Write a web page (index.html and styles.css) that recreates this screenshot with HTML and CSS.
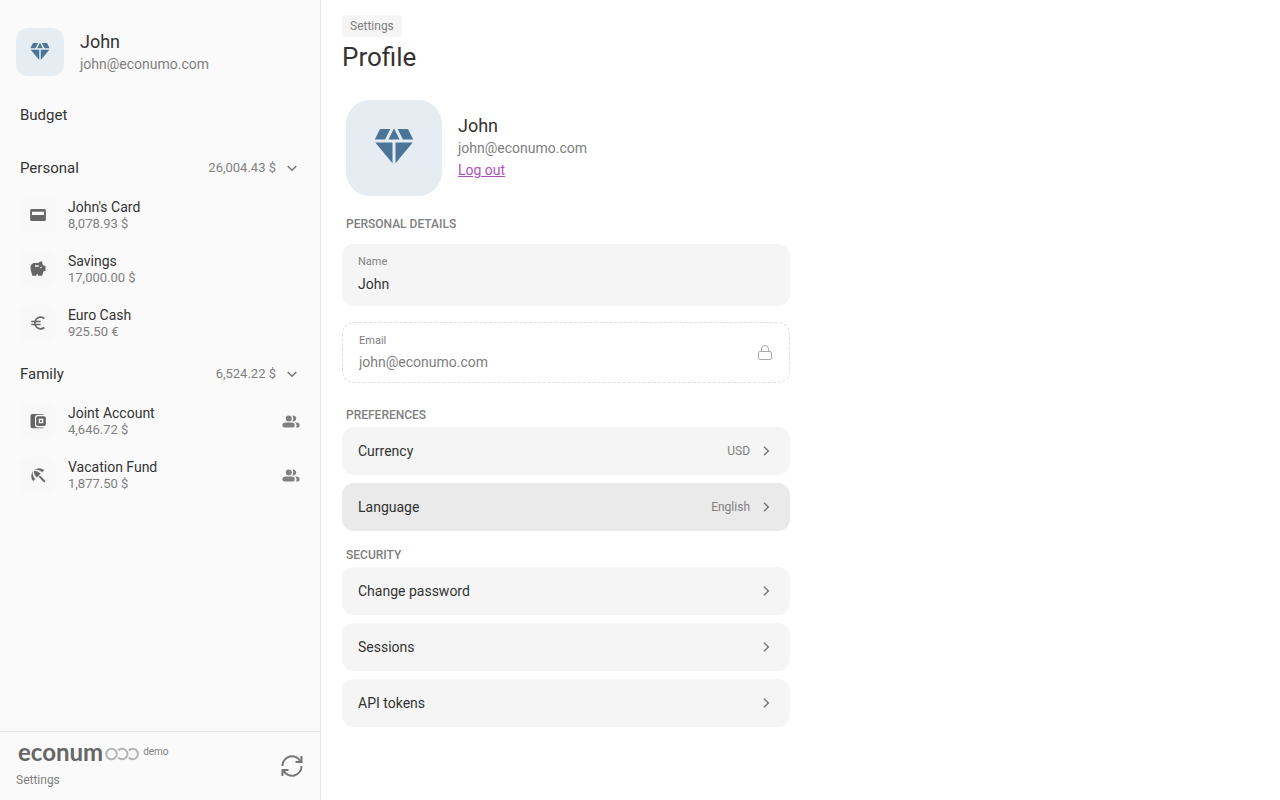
FILE: index.html
```html
<!DOCTYPE html>
<html lang="en">
<head>
    <meta charset="UTF-8">
    <meta name="viewport" content="width=device-width, initial-scale=1.0">
    <title>Profile</title>
    <link rel="stylesheet" href="styles.css">
</head>
<body>
    <svg class="sprite" aria-hidden="true">
        <symbol id="diamond" viewBox="0 0 24 24">
            <path d="M12.16 3h-.32L9.21 8.25h5.58zm4.3 5.25h5.16L19 3h-5.16zm4.92 1.5h-8.63V20.1zM11.25 20.1V9.75H2.62zM7.54 8.25 10.16 3H5L2.38 8.25z"/>
        </symbol>
        <symbol id="people" viewBox="0 0 24 24">
            <circle cx="9" cy="8.500" r="4"/>
            <path d="M15 12.500c2.210 0 4-1.790 4-4s-1.790-4-4-4c-.47 0-.91.1-1.330.24C14.500 5.770 15 7.080 15 8.500s-.5 2.730-1.330 3.760c.42.14.86.24 1.330.24z"/>
            <path d="M5 14h8q4 0 4 3.500t-3 3H4q-3.500 0-3.500-3T5 14zM17 14h2q4.500 0 4.500 3.500t-3 3h-2q1-1 1-3t-2.500-3.500z"/>
        </symbol>
        <symbol id="chevron" viewBox="0 0 24 24">
            <path d="M9 5.500l6.500 6.500L9 18.500" fill="none" stroke="currentColor" stroke-width="2.200"/>
        </symbol>
    </svg>

    <div class="layout">
        <aside class="sidebar">
            <div class="user">
                <div class="avatar"><svg class="icon"><use href="#diamond"/></svg></div>
                <div>
                    <div class="user-name">John</div>
                    <div class="user-email">john@econumo.com</div>
                </div>
            </div>

            <nav class="nav">
                <a class="budget" href="#">Budget</a>

                <button class="folder" type="button">
                    <span class="folder-name">Personal</span>
                    <span class="amount">26,004.43 $</span>
                    <svg class="arrow down"><use href="#chevron"/></svg>
                </button>
                <ul class="accounts">
                    <li>
                        <a class="account" href="#">
                            <span class="account-icon"><svg class="icon" viewBox="0 0 24 24"><path fill-rule="evenodd" d="M3.500 4h17a2 2 0 0 1 2 2v12a2 2 0 0 1-2 2h-17a2 2 0 0 1-2-2V6a2 2 0 0 1 2-2zm.5 3.500V12h16V7.500z"/></svg></span>
                            <span class="account-text"><span class="account-name">John's Card</span><span class="amount">8,078.93 $</span></span>
                        </a>
                    </li>
                    <li>
                        <a class="account" href="#">
                            <span class="account-icon"><svg class="icon" viewBox="0 0 24 24"><path d="M19.830 7.500l-2.270-2.270c.07-.42.18-.81.32-1.150.08-.18.12-.37.12-.58 0-.83-.67-1.500-1.500-1.500-1.640 0-3.090.79-4 2h-5C4.460 4 2 6.460 2 9.500S4.500 21 4.500 21H10v-2h2v2h5.500l1.680-5.590 2.820-.94V7.500h-2.170zM13 9H8V7h5v2zm3 2c-.55 0-1-.45-1-1s.45-1 1-1 1 .45 1 1-.45 1-1 1z"/></svg></span>
                            <span class="account-text"><span class="account-name">Savings</span><span class="amount">17,000.00 $</span></span>
                        </a>
                    </li>
                    <li>
                        <a class="account" href="#">
                            <span class="account-icon"><svg class="icon" viewBox="0 0 24 24"><path d="M20.500 6A7.800 7.800 0 1 0 20.500 18M3 10h12.500M3 14h12.500" fill="none" stroke="currentColor" stroke-width="2.200"/></svg></span>
                            <span class="account-text"><span class="account-name">Euro Cash</span><span class="amount">925.50 €</span></span>
                        </a>
                    </li>
                </ul>

                <button class="folder" type="button">
                    <span class="folder-name">Family</span>
                    <span class="amount">6,524.22 $</span>
                    <svg class="arrow down"><use href="#chevron"/></svg>
                </button>
                <ul class="accounts">
                    <li>
                        <a class="account" href="#">
                            <span class="account-icon"><svg class="icon" viewBox="0 0 24 24"><path d="M20 20.500q-.5 1-2 1H4.500q-2.500 0-2.500-2.500V5q0-2.500 2.500-2.500H18q1.500 0 2 1h-8q-4 0-4 4v9q0 4 4 4z"/><path fill-rule="evenodd" d="M12 5.500h8q2.500 0 2.500 2.500v8q0 2.500-2.500 2.500h-8q-2.500 0-2.500-2.500V8q0-2.500 2.500-2.500zm1 3.500v6h6V9z"/><circle cx="16" cy="12" r="1.500"/></svg></span>
                            <span class="account-text"><span class="account-name">Joint Account</span><span class="amount">4,646.72 $</span></span>
                            <svg class="shared"><use href="#people"/></svg>
                        </a>
                    </li>
                    <li>
                        <a class="account" href="#">
                            <span class="account-icon"><svg class="icon" viewBox="0 0 24 24"><path d="M12.700 14.400l1.800-1.800 7.500 7.500L20.200 22z"/><path stroke="#f8f8f8" d="M17.420 8.830l3.400-3.400c-4.400-3.900-10.900-3.900-14.860.53 3.930-1.300 8.330-.26 11.460 2.870zM5.950 5.980c-4.400 3.950-4.400 10.400-.5 14.800l3.380-3.360C5.700 14.290 4.650 9.910 5.950 5.980zm.02-.02l-.01.01c-.38 3.010 1.170 6.880 4.300 10.020l5.730-5.730c-3.130-3.130-7.010-4.680-10.020-4.300z"/></svg></span>
                            <span class="account-text"><span class="account-name">Vacation Fund</span><span class="amount">1,877.50 $</span></span>
                            <svg class="shared"><use href="#people"/></svg>
                        </a>
                    </li>
                </ul>
            </nav>

            <footer class="footer">
                <div>
                    <div class="brand">
                        <span class="logo">econum</span>
                        <svg class="rings" viewBox="0 0 34 18"><g fill="none" stroke="#b5b5b5" stroke-width="2"><circle cx="6.500" cy="11" r="5.300"/><path d="M13.200 7.500a5.300 5.300 0 1 1 0 7M23.700 7.500a5.300 5.300 0 1 1 0 7"/></g></svg>
                        <span class="demo">demo</span>
                    </div>
                    <a class="settings" href="#">Settings</a>
                </div>
                <button class="sync" type="button" aria-label="Sync">
                    <svg viewBox="0 0 24 24"><path d="M2.500 12A9.500 9.500 0 0 1 20.500 7.500M21.500 2v6h-6M21.500 12A9.500 9.500 0 0 1 3.500 16.500M2.500 22v-6h6" fill="none" stroke="currentColor" stroke-width="2"/></svg>
                </button>
            </footer>
        </aside>

        <main class="content">
            <a class="crumb" href="#">Settings</a>
            <h1>Profile</h1>

            <div class="profile">
                <button class="avatar big" type="button" aria-label="Change avatar"><svg class="icon"><use href="#diamond"/></svg></button>
                <div>
                    <div class="user-name">John</div>
                    <div class="user-email">john@econumo.com</div>
                    <a class="logout" href="#">Log out</a>
                </div>
            </div>

            <section class="details">
                <h2>Personal details</h2>
                <div class="field">
                    <div class="field-body">
                        <label for="name">Name</label>
                        <input id="name" type="text" value="John">
                    </div>
                </div>
                <div class="field locked">
                    <div class="field-body">
                        <label for="email">Email</label>
                        <input id="email" type="email" value="john@econumo.com" readonly>
                    </div>
                    <svg class="lock" viewBox="0 0 16 16"><path d="M3 7.500h10q1.500 0 1.500 1.500v5q0 1.500-1.500 1.500H3Q1.500 15.500 1.500 14V9Q1.500 7.500 3 7.500zM4.500 7.500V5a3.500 3.500 0 0 1 7 0v2.500" fill="none" stroke="currentColor"/></svg>
                </div>
            </section>

            <section>
                <h2>Preferences</h2>
                <button class="row" type="button"><span class="row-name">Currency</span><span class="value">USD</span><svg class="arrow"><use href="#chevron"/></svg></button>
                <button class="row active" type="button"><span class="row-name">Language</span><span class="value">English</span><svg class="arrow"><use href="#chevron"/></svg></button>
            </section>

            <section>
                <h2>Security</h2>
                <button class="row" type="button"><span class="row-name">Change password</span><svg class="arrow"><use href="#chevron"/></svg></button>
                <button class="row" type="button"><span class="row-name">Sessions</span><svg class="arrow"><use href="#chevron"/></svg></button>
                <button class="row" type="button"><span class="row-name">API tokens</span><svg class="arrow"><use href="#chevron"/></svg></button>
            </section>
        </main>
    </div>
</body>
</html>
```
FILE: styles.css
```css
*{
    box-sizing: border-box;
}
body,ul,h1,h2{
    margin: 0;
    padding: 0;
    list-style: none;
}
body{
    font-family: Roboto, "Liberation Sans", sans-serif;
    font-size: 14px;
    line-height: 20px;
    color: #333;
    background: #fff;
}
button,input{
    padding: 0;
    border: 0;
    font: inherit;
    color: inherit;
    background: none;
}
button{
    cursor: pointer;
    text-align: left;
}
a{
    color: inherit;
    text-decoration: none;
}
svg{
    display: block;
    fill: currentColor;
    flex-shrink: 0;
}
.sprite{
    display: none;
}
.layout{
    display: flex;
    min-height: 100vh;
}

/* sidebar */
.sidebar{
    display: flex;
    flex-direction: column;
    width: 321px;
    flex-shrink: 0;
    background: #fafafa;
    border-right: 1px solid #e5e5e5;
}
.user{
    display: flex;
    align-items: center;
    gap: 16px;
    padding: 28px 16px 20px;
}
.avatar{
    display: flex;
    align-items: center;
    justify-content: center;
    width: 48px;
    height: 48px;
    border-radius: 12px;
    color: #4a7599;
    background: #e5edf3;
}
.avatar .icon{
    width: 24px;
    height: 24px;
}
.user-name{
    font-size: 18px;
    line-height: 24px;
}
.user-email{
    color: #808080;
}
.nav{
    flex: 1;
    padding: 0 20px;
}
.budget{
    display: block;
    padding: 8px 0;
    font-size: 15px;
    line-height: 22px;
}
.folder{
    display: flex;
    align-items: center;
    width: 100%;
    height: 36px;
    margin-top: 16px;
}
.accounts{
    padding-top: 2px;
}
.accounts + .folder{
    margin-top: 6px;
}
.folder-name{
    flex: 1;
    font-size: 15px;
}
.amount{
    font-size: 13px;
    line-height: 16px;
    color: #808080;
}
.arrow{
    width: 16px;
    height: 16px;
    color: #777;
}
.down{
    margin: 0 0 0 8px;
    transform: rotate(90deg);
}
.account{
    display: flex;
    align-items: center;
    height: 54px;
    gap: 12px;
}
.account-icon{
    display: flex;
    align-items: center;
    justify-content: center;
    width: 36px;
    height: 36px;
    border-radius: 8px;
    color: #666;
    background: #f8f8f8;
}
.account-icon .icon{
    width: 18px;
    height: 18px;
}
.account-text{
    flex: 1;
}
.account-name,
.account .amount{
    display: block;
}
.account-name{
    line-height: 18px;
}
.shared{
    width: 18px;
    height: 18px;
    color: #808080;
}
.footer{
    display: flex;
    align-items: center;
    justify-content: space-between;
    height: 69px;
    padding: 0 16px;
    border-top: 1px solid #e5e5e5;
}
.brand{
    display: flex;
    align-items: center;
    padding: 0 0 8px 2px;
}
.logo{
    font: 700 24px/20px Lato, sans-serif;
    color: #666;
}
.rings{
    width: 34px;
    height: 18px;
    margin: 0 4px 0 2px;
}
.demo{
    font-size: 10px;
    color: #808080;
}
.settings{
    display: block;
    font-size: 12px;
    color: #808080;
}
.sync{
    color: #777;
}
.sync svg{
    width: 24px;
    height: 24px;
}

/* profile page */
.content{
    flex: 1;
    padding: 15px 21px;
}
.content section{
    max-width: 448px;
}
.crumb{
    display: block;
    width: max-content;
    padding: 0 8px;
    border-radius: 4px;
    font-size: 12px;
    line-height: 22px;
    color: #808080;
    background: #f5f5f5;
}
h1{
    font-size: 26px;
    line-height: 40px;
    font-weight: 400;
}
.profile{
    display: flex;
    align-items: center;
    gap: 16px;
    padding: 23px 4px 16px;
}
.big{
    width: 96px;
    height: 96px;
    padding-bottom: 2px;
    border-radius: 24px;
}
.big .icon{
    width: 48px;
    height: 48px;
}
.logout{
    display: block;
    line-height: 24px;
    color: #b04fc0;
    text-decoration: underline;
}
h2{
    padding: 0 4px;
    font-size: 12px;
    line-height: 24px;
    font-weight: 500;
    text-transform: uppercase;
    color: #808080;
}
.details h2{
    margin-bottom: 8px;
}
.field{
    display: flex;
    align-items: center;
    padding: 8px 16px 10px;
    margin-bottom: 16px;
    border-radius: 12px;
    background: #f5f5f5;
}
.field-body{
    flex: 1;
}
.field label{
    display: block;
    font-size: 11px;
    line-height: 20px;
    color: #808080;
}
.field input{
    display: block;
    width: 100%;
    height: 24px;
    outline: none;
}
.locked{
    padding-bottom: 9px;
    margin-bottom: 20px;
    border: 1px dashed #ddd;
    background: none;
    color: #808080;
}
.locked input{
    height: 22px;
}
.lock{
    width: 16px;
    height: 16px;
    color: #aaa;
}
.row{
    display: flex;
    align-items: center;
    gap: 8px;
    width: 100%;
    height: 48px;
    padding: 0 16px;
    margin-bottom: 8px;
    border-radius: 12px;
    background: #f5f5f5;
}
.row:last-child{
    margin-bottom: 12px;
}
.active{
    background: #eaeaea;
}
.row-name{
    flex: 1;
}
.value{
    font-size: 12px;
    color: #808080;
}
```
